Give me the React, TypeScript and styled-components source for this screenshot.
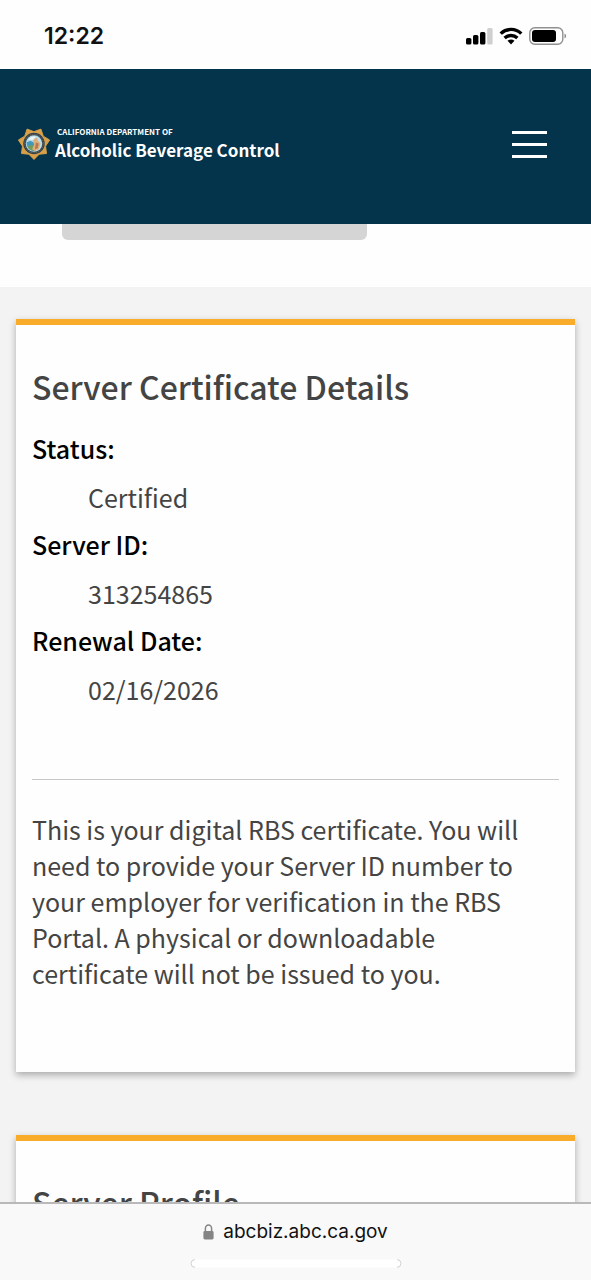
import React from "react";
import styled, { createGlobalStyle } from "styled-components";

const sans = `"Noto Sans CJK SC", "Noto Sans CJK JP", "Open Sans", sans-serif`;
const system = `Inter, "Liberation Sans", sans-serif`;

const GlobalStyle = createGlobalStyle`
  *, *::before, *::after { box-sizing: border-box; }
  body { margin: 0; background: #f3f3f3; }
`;

const Screen = styled.div`
  display: flex;
  flex-direction: column;
  height: 100vh;
  overflow: hidden;
  font-family: ${sans};
  font-size: 25px;
  line-height: 36px;
  color: #444444;
`;

const StatusBar = styled.div`
  display: flex;
  flex: none;
  align-items: center;
  justify-content: space-between;
  height: 69px;
  padding: 2px 24px 0 44px;
  background: #fefefe;
`;

const Time = styled.time`
  font-family: ${system};
  font-size: 23px;
  font-weight: 600;
  line-height: 28px;
  color: #111111;
`;

const Indicators = styled.div`
  display: flex;
  align-items: center;
  gap: 6px;
`;

const SiteHeader = styled.header`
  display: flex;
  flex: none;
  align-items: center;
  justify-content: space-between;
  height: 155px;
  padding: 0 44px 4px 18px;
  background: #03344b;
`;

const Brand = styled.a`
  display: flex;
  align-items: center;
  gap: 5px;
  padding-bottom: 1px;
  color: #ffffff;
  text-decoration: none;
`;

const BrandText = styled.span`
  display: flex;
  flex-direction: column;
`;

const Department = styled.span`
  padding-left: 2px;
  font-size: 8px;
  font-weight: 700;
  line-height: 12px;
`;

const Agency = styled.span`
  font-size: 17px;
  font-weight: 700;
  line-height: 24px;
`;

const MenuButton = styled.button`
  display: flex;
  flex-direction: column;
  gap: 9px;
  width: 35px;
  padding: 0;
  border: 0;
  background: none;
`;

const MenuBar = styled.span`
  height: 3px;
  background: #ffffff;
`;

const Content = styled.main`
  flex: 1;
  min-height: 0;
  overflow: hidden;
`;

const Search = styled.section`
  height: 63px;
  padding: 0 62px;
  background: #fefefe;
`;

const SearchButton = styled.button`
  display: block;
  width: 305px;
  height: 16px;
  border: 0;
  border-radius: 0 0 6px 6px;
  background: #d5d5d5;
`;

const Cards = styled.div`
  display: flex;
  flex-direction: column;
  gap: 63px;
  padding: 32px 16px;
`;

const Card = styled.section`
  padding: 37px 16px 81px;
  border-top: 6px solid #f8ac2a;
  background: #fefefe;
  box-shadow: 0 3px 7px rgba(0, 0, 0, 0.3);
`;

const CardTitle = styled.h2`
  margin: 0 0 20px;
  font-size: 32px;
  font-weight: 500;
  line-height: 48px;
`;

const Details = styled.dl`
  margin: 0;
`;

const Label = styled.dt`
  margin-bottom: 13px;
  font-weight: 500;
  color: #000000;
`;

const Value = styled.dd`
  margin: 0 0 11px 56px;
`;

const Divider = styled.hr`
  height: 1px;
  margin: 72px 0 31px;
  border: 0;
  background: #c8c8c8;
`;

const Note = styled.p`
  margin: 0;
  padding-right: 16px;
`;

const BrowserBar = styled.footer`
  display: flex;
  flex: none;
  flex-direction: column;
  align-items: center;
  gap: 13px;
  height: 78px;
  padding-top: 14px;
  border-top: 2px solid #b9b9b9;
  background: #f9f9f9;
`;

const Address = styled.div`
  display: flex;
  align-items: center;
  gap: 9px;
  font-family: ${system};
  font-size: 19px;
  line-height: 28px;
  color: #111111;
`;

const HomeIndicator = styled.svg`
  display: block;
  flex: none;
`;

const StatusIcon = styled.svg`
  display: block;
`;

const SignalIcon = () => (
  <StatusIcon width="27" height="18" viewBox="0 0 27 18" aria-label="Signal">
    <rect x="0" y="11" width="5.4" height="6.5" rx="1.5" fill="#000" />
    <rect x="7" y="8" width="5.4" height="9.5" rx="1.5" fill="#000" />
    <rect x="14" y="5" width="5.4" height="12.5" rx="1.5" fill="#000" />
    <rect x="21.2" y="1" width="5.4" height="16.5" rx="1.5" fill="#cfcfcf" />
  </StatusIcon>
);

const WifiIcon = () => (
  <StatusIcon width="24" height="18" viewBox="0 0 24 18" aria-label="Wi-Fi">
    <g fill="none" stroke="#000" strokeWidth="3.4">
      <path d="M1.7 6.6C7.4 1 16.6 1 22.3 6.6" />
      <path d="M5.6 11c3.6-3.4 9.2-3.4 12.8 0" />
    </g>
    <path d="M12 17.4l-3.5-3.6c2-1.7 5-1.7 7 0z" fill="#000" />
  </StatusIcon>
);

const BatteryIcon = () => (
  <StatusIcon width="38" height="18" viewBox="0 0 38 18" aria-label="Battery">
    <rect x="0.8" y="0.8" width="33" height="16.4" rx="5" fill="none" stroke="#909090" strokeWidth="1.4" />
    <rect x="3" y="3" width="24" height="12" rx="3" fill="#000" />
    <path d="M35.5 6.5c2.2.8 2.2 4.2 0 5z" fill="#909090" />
  </StatusIcon>
);

const Badge = () => {
  const points = Array.from({ length: 14 }, (_, i) => {
    const angle = Math.PI / 2 + (i * Math.PI) / 7;
    const radius = i % 2 ? 12.6 : 17;
    return `${16 + radius * Math.cos(angle)},${16 + radius * Math.sin(angle)}`;
  }).join(" ");
  return (
    <svg width="32" height="34" viewBox="-1 -1 34 35" aria-hidden="true">
      <polygon points={points} fill="#d9a04a" stroke="#d9a04a" strokeLinejoin="round" />
      <circle cx="16" cy="16" r="11.4" fill="#2b3f4d" />
      <circle cx="16" cy="16" r="9.9" fill="none" stroke="#a98b58" strokeWidth="0.8" strokeDasharray="1 1" />
      <circle cx="16" cy="16" r="8.8" fill="#b9dcec" />
      <path d="M8 15l4-2 4 2 2 8c-4 2-9 0-10-8z" fill="#4198bd" />
      <path d="M9 19c3-2 5-1 8 0l-1 5c-3 0-6-2-7-5z" fill="#739b5b" />
      <path d="M17 10c2-1 3 1 3 3l3 3-2 6-4 2-3-2 2-5-1-4z" fill="#dfaf79" />
      <path d="M18 15l3 1-1 5-3 1z" fill="#b77854" />
      <path d="M10 12c2-3 5-4 8-3l-3 3z" fill="#eef7f8" />
    </svg>
  );
};

const LockIcon = () => (
  <svg width="11" height="16" viewBox="0 0 11 16" aria-hidden="true">
    <path d="M2.4 8V4.6a3.1 3.6 0 0 1 6.2 0V8" fill="none" stroke="#858585" strokeWidth="1.5" />
    <rect x="0.4" y="7" width="10.2" height="8.4" rx="1.4" fill="#858585" />
  </svg>
);

const details = [
  { label: "Status:", value: "Certified" },
  { label: "Server ID:", value: "313254865" },
  { label: "Renewal Date:", value: "02/16/2026" },
];

export default function App() {
  return (
    <Screen>
      <GlobalStyle />
      <StatusBar>
        <Time>12:22</Time>
        <Indicators>
          <SignalIcon />
          <WifiIcon />
          <BatteryIcon />
        </Indicators>
      </StatusBar>
      <SiteHeader>
        <Brand href="#">
          <Badge />
          <BrandText>
            <Department>CALIFORNIA DEPARTMENT OF</Department>
            <Agency>Alcoholic Beverage Control</Agency>
          </BrandText>
        </Brand>
        <MenuButton type="button" aria-label="Menu">
          <MenuBar />
          <MenuBar />
          <MenuBar />
        </MenuButton>
      </SiteHeader>
      <Content>
        <Search>
          <SearchButton type="button" aria-label="Search" />
        </Search>
        <Cards>
          <Card>
            <CardTitle>Server Certificate Details</CardTitle>
            <Details>
              {details.map(({ label, value }) => (
                <React.Fragment key={label}>
                  <Label>{label}</Label>
                  <Value>{value}</Value>
                </React.Fragment>
              ))}
            </Details>
            <Divider />
            <Note>
              This is your digital RBS certificate. You will need to provide your Server ID number to
              your employer for verification in the RBS Portal. A physical or downloadable certificate
              will not be issued to you.
            </Note>
          </Card>
          <Card>
            <CardTitle>Server Profile</CardTitle>
          </Card>
        </Cards>
      </Content>
      <BrowserBar>
        <Address>
          <LockIcon />
          <span>abcbiz.abc.ca.gov</span>
        </Address>
        <HomeIndicator width="212" height="9" viewBox="0 0 212 9" aria-hidden="true">
          <rect x="1" y="0.5" width="210" height="8" rx="4" fill="#ffffff" />
          <path d="M5 .6a3.9 3.9 0 0 0 0 7.8M207 .6a3.9 3.9 0 0 1 0 7.8" fill="none" stroke="#d2d2d2" />
        </HomeIndicator>
      </BrowserBar>
    </Screen>
  );
}
